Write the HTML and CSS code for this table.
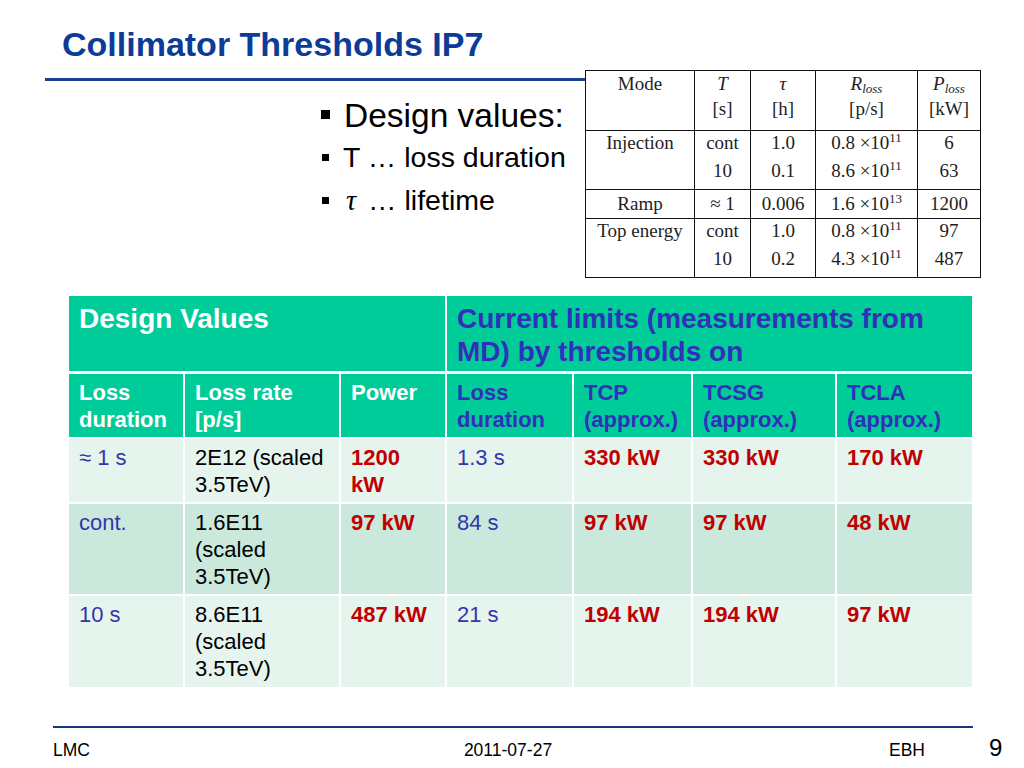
FILE: index.html
```html
<!DOCTYPE html>
<html lang="en">
<head>
<meta charset="utf-8">
<title>Collimator Thresholds IP7</title>
<link rel="stylesheet" href="styles.css">
</head>
<body>
<div class="slide">
  <div class="top">
    <div class="top-left">
      <h1 class="title">Collimator Thresholds IP7</h1>
      <div class="rule"></div>
      <ul class="bullets">
        <li class="b-big"><span class="sq sq-big"></span><span>Design values:</span></li>
        <li class="b-mid"><span class="sq"></span><span>T … loss duration</span></li>
        <li class="b-mid b-last"><span class="sq"></span><span><span class="tau">τ</span> … lifetime</span></li>
      </ul>
    </div>
    <table class="ref">
      <colgroup>
        <col class="rc1"><col class="rc2"><col class="rc3"><col class="rc4"><col class="rc5">
      </colgroup>
      <tr class="rh">
        <td>Mode</td>
        <td><i>T</i><br>[s]</td>
        <td><i>τ</i><br>[h]</td>
        <td><i>R</i><sub><i>loss</i></sub><br>[p/s]</td>
        <td><i>P</i><sub><i>loss</i></sub><br>[kW]</td>
      </tr>
      <tr class="r2">
        <td><div class="lines">Injection</div></td>
        <td><div class="lines">cont<br>10</div></td>
        <td><div class="lines">1.0<br>0.1</div></td>
        <td><div class="lines">0.8 ×10<sup>11</sup><br>8.6 ×10<sup>11</sup></div></td>
        <td><div class="lines">6<br>63</div></td>
      </tr>
      <tr class="r1">
        <td>Ramp</td>
        <td>≈ 1</td>
        <td>0.006</td>
        <td>1.6 ×10<sup>13</sup></td>
        <td>1200</td>
      </tr>
      <tr class="r2">
        <td><div class="lines">Top energy</div></td>
        <td><div class="lines">cont<br>10</div></td>
        <td><div class="lines">1.0<br>0.2</div></td>
        <td><div class="lines">0.8 ×10<sup>11</sup><br>4.3 ×10<sup>11</sup></div></td>
        <td><div class="lines">97<br>487</div></td>
      </tr>
    </table>
  </div>

  <table class="main">
    <colgroup>
      <col class="c1"><col class="c2"><col class="c3"><col class="c4"><col class="c5"><col class="c6"><col class="c7">
    </colgroup>
    <tr class="h1">
      <td colspan="3" class="white">Design Values</td>
      <td colspan="4" class="blue">Current limits (measurements from MD) by thresholds on</td>
    </tr>
    <tr class="h2">
      <td class="white">Loss duration</td>
      <td class="white">Loss rate [p/s]</td>
      <td class="white">Power</td>
      <td class="blue">Loss duration</td>
      <td class="blue">TCP (approx.)</td>
      <td class="blue">TCSG (approx.)</td>
      <td class="blue">TCLA (approx.)</td>
    </tr>
    <tr class="d d1">
      <td class="lb">≈ 1 s</td>
      <td>2E12 (scaled 3.5TeV)</td>
      <td class="red">1200 kW</td>
      <td class="lb">1.3 s</td>
      <td class="red">330 kW</td>
      <td class="red">330 kW</td>
      <td class="red">170 kW</td>
    </tr>
    <tr class="d d2">
      <td class="lb">cont.</td>
      <td>1.6E11 (scaled 3.5TeV)</td>
      <td class="red">97 kW</td>
      <td class="lb">84 s</td>
      <td class="red">97 kW</td>
      <td class="red">97 kW</td>
      <td class="red">48 kW</td>
    </tr>
    <tr class="d d3">
      <td class="lb">10 s</td>
      <td>8.6E11 (scaled 3.5TeV)</td>
      <td class="red">487 kW</td>
      <td class="lb">21 s</td>
      <td class="red">194 kW</td>
      <td class="red">194 kW</td>
      <td class="red">97 kW</td>
    </tr>
  </table>

  <footer class="footer">
    <div class="frule"></div>
    <div class="ftext">
      <span class="f-left">LMC</span>
      <span class="f-mid">2011-07-27</span>
      <span class="f-right">EBH</span>
      <span class="f-page">9</span>
    </div>
  </footer>
</div>
</body>
</html>
```

FILE: styles.css
```css
html, body {
  margin: 0;
  padding: 0;
  background: #ffffff;
}

.slide {
  width: 1024px;
  height: 768px;
  display: flex;
  flex-direction: column;
  font-family: "Liberation Sans", Arial, sans-serif;
  color: #000;
  overflow: hidden;
}

/* ---------- top area ---------- */
.top {
  display: flex;
  align-items: flex-start;
  padding-left: 45px;
}

.top-left {
  width: 540px;
  flex: none;
}

.title {
  margin: 0;
  padding: 27px 0 0 17px;
  font-size: 34px;
  line-height: 34px;
  font-weight: bold;
  color: #0c3b98;
}

.rule {
  margin-top: 17px;
  height: 3px;
  background: #1b3f8f;
}

.bullets {
  list-style: none;
  margin: 15px 0 0 0;
  padding: 0 0 0 276px;
}

.bullets li {
  display: flex;
  align-items: center;
  height: 40px;
  white-space: nowrap;
}

.b-big {
  font-size: 33.5px;
}

.b-mid {
  font-size: 28.5px;
  margin-top: 1px;
}

.b-last {
  margin-top: 3px;
}

.sq {
  flex: none;
  width: 7px;
  height: 7px;
  background: #000;
  margin: 1px 14px 0 1px;
}

.sq-big {
  width: 9px;
  height: 9px;
  margin: -4px 14px 0 0;
}

.tau {
  font-family: "Liberation Serif", "Times New Roman", serif;
  font-style: italic;
  margin-left: 3px;
  margin-right: 4px;
}

/* ---------- reference (paper) table ---------- */
.ref {
  margin-top: 70px;
  border-collapse: collapse;
  table-layout: fixed;
  width: 395px;
  font-family: "Liberation Serif", "Times New Roman", serif;
  font-size: 19px;
  color: #1e1e1e;
  background: #fff;
}

.rc1 { width: 109px; }
.rc2 { width: 56px; }
.rc3 { width: 65px; }
.rc4 { width: 102px; }
.rc5 { width: 63px; }

.ref td {
  border: 1px solid #111;
  padding: 0;
  text-align: center;
  vertical-align: top;
  line-height: 27px;
  white-space: nowrap;
}

.ref .rh { height: 60px; }
.ref .rh td { line-height: 25px; padding-top: 0; }
.ref .r2 { height: 59px; }
.ref .r1 { height: 29px; }

.ref .lines {
  margin-top: -2px;
  line-height: 28px;
}

.ref sup {
  font-size: 13px;
  line-height: 0;
  vertical-align: 7px;
}

.ref sub {
  font-size: 13px;
  line-height: 0;
  vertical-align: -3px;
}

/* ---------- main table ---------- */
.main {
  margin: 18px 0 0 69px;
  width: 903px;
  table-layout: fixed;
  border-collapse: separate;
  border-spacing: 0;
  font-size: 22px;
}

.c1 { width: 114px; }
.c2 { width: 156px; }
.c3 { width: 106px; }
.c4 { width: 127px; }
.c5 { width: 119px; }
.c6 { width: 144px; }
.c7 { width: 137px; }

.main td {
  vertical-align: top;
  padding: 5px 10px 0 10px;
  line-height: 27px;
  border-left: 2px solid #fff;
  border-top: 2px solid #fff;
}

.main td:first-child {
  border-left: 0;
}

.main .h1 td {
  border-top: 0;
  background: #00cc99;
  font-size: 28px;
  line-height: 33px;
  font-weight: bold;
  padding-top: 6px;
}

.main .h1 { height: 75px; }

.main .h2 td {
  border-top-width: 3px;
  background: #00cc99;
  font-weight: bold;
}

.main .h2 { height: 66px; }

.main .d1 { height: 65px; }
.main .d2 { height: 92px; }
.main .d3 { height: 93px; }

.main .d1 td,
.main .d3 td {
  background: #e6f4ee;
}

.main .d2 td {
  background: #cae9dc;
}

.white { color: #ffffff; }
.blue { color: #3030bb; }
.lb { color: #3535aa; }
.red { color: #c00000; font-weight: bold; }

/* ---------- footer ---------- */
.footer {
  margin-top: 39px;
}

.frule {
  margin-left: 53px;
  width: 920px;
  height: 2px;
  background: #133a80;
}

.ftext {
  display: flex;
  align-items: baseline;
  margin-top: 10px;
  padding-left: 53px;
  font-size: 17.5px;
  line-height: 20px;
  color: #000;
}

.f-left {
  width: 363px;
}

.f-mid {
  width: 184px;
  text-align: center;
}

.f-right {
  margin-left: 289px;
}

.f-page {
  margin-left: 64px;
  font-size: 24px;
}
```
